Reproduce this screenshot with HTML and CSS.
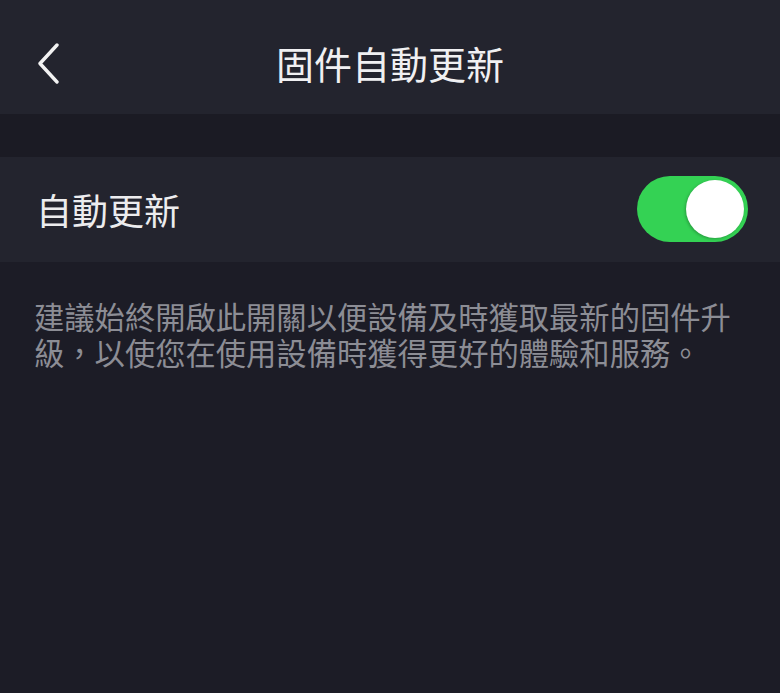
FILE: index.html
```html
<!DOCTYPE html>
<html lang="zh-Hant">
<head>
<meta charset="utf-8">
<link rel="stylesheet" href="styles.css">
</head>
<body>
<div class="page">
  <header class="nav">
    <div class="back">
      <svg width="26" height="42" viewBox="0 0 26 42"><path d="M22 3 L5 21.5 L22 40" fill="none" stroke="#f2f2f2" stroke-width="3.4" stroke-linecap="round" stroke-linejoin="round"/></svg>
    </div>
    <h1 class="title">固件自動更新</h1>
  </header>
  <div class="spacer"></div>
  <section class="row">
    <span class="label">自動更新</span>
    <div class="toggle"><div class="knob"></div></div>
  </section>
  <p class="desc">建議始終開啟此開關以便設備及時獲取最新的固件升級，以使您在使用設備時獲得更好的體驗和服務。</p>
</div>
</body>
</html>
```
FILE: styles.css
```css
html, body {
  margin: 0;
  padding: 0;
  background: #1c1c26;
}
.page {
  width: 780px;
  height: 693px;
  background: #1c1c26;
  font-family: "Noto Sans CJK TC", "Noto Sans CJK SC", sans-serif;
  overflow: hidden;
}
.nav {
  height: 114px;
  background: #23242e;
  display: flex;
  align-items: center;
  justify-content: center;
  position: relative;
}
.back {
  position: absolute;
  left: 35px;
  top: 42px;
  width: 26px;
  height: 42px;
}
.back svg { display: block; }
.title {
  margin: 0;
  margin-top: 12px;
  font-size: 38px;
  font-weight: 400;
  color: #f0f0f2;
  line-height: 1;
}
.spacer {
  height: 43px;
  background: #1b1b24;
}
.row {
  height: 105px;
  background: #23242e;
  display: flex;
  align-items: center;
  justify-content: space-between;
  padding: 0 32px 0 36px;
}
.label {
  font-size: 36px;
  color: #ececee;
  line-height: 1;
  margin-top: -2px;
}
.toggle {
  width: 111px;
  height: 66px;
  border-radius: 33px;
  background: #34d254;
  position: relative;
  margin-top: -1px;
}
.knob {
  position: absolute;
  right: 4px;
  top: 4px;
  width: 58px;
  height: 58px;
  border-radius: 50%;
  background: #ffffff;
  box-shadow: -1px 1px 3px rgba(0,0,0,0.25);
}
.desc {
  margin: 36px 0 0;
  padding: 0 36px 0 34px;
  font-size: 30.3px;
  line-height: 36px;
  color: #8c8d95;
}
```
